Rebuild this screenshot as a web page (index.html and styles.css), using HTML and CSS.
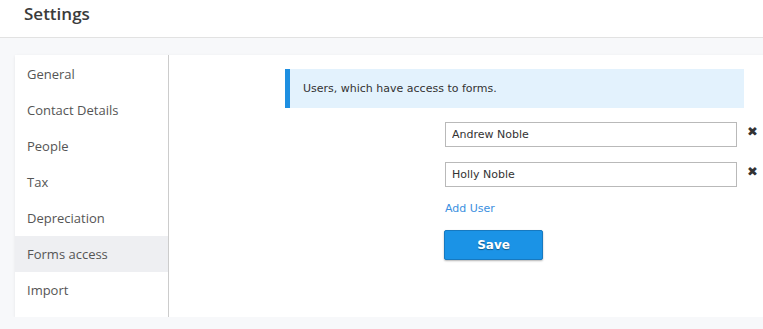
FILE: index.html
```html
<!DOCTYPE html>
<html lang="en">
<head>
  <meta charset="UTF-8">
  <meta name="viewport" content="width=device-width, initial-scale=1.0">
  <title>Settings - Forms access</title>
  <link rel="stylesheet" href="styles.css">
</head>
<body>
  <header class="page-header">
    <h1>Settings</h1>
  </header>

  <div class="page-body">
    <div class="card">
      <ul class="side-menu">
        <li>General</li>
        <li>Contact Details</li>
        <li>People</li>
        <li>Tax</li>
        <li>Depreciation</li>
        <li class="active">Forms access</li>
        <li>Import</li>
      </ul>

      <div class="content">
        <div class="info-box">Users, which have access to forms.</div>

        <form class="users-form">
          <div class="user-row">
            <input type="text" value="Andrew Noble">
            <span class="remove">&#10006;</span>
          </div>
          <div class="user-row">
            <input type="text" value="Holly Noble">
            <span class="remove">&#10006;</span>
          </div>
          <a href="#" class="add-link">Add User</a>
          <button type="button" class="btn-save">Save</button>
        </form>
      </div>
    </div>
  </div>
</body>
</html>
```

FILE: styles.css
```css
body {
  margin: 0;
  padding: 0;
  background-color: #f7f8fa;
  font-family: "Open Sans", Arial, sans-serif;
  color: #333;
  overflow: hidden;
}

.page-header {
  height: 37px;
  background-color: white;
  border-bottom: 1px solid #e2e2e2;
}

  .page-header h1 {
    margin: 0;
    padding-left: 24px;
    font-size: 17px;
    font-weight: 600;
    line-height: 28px;
    color: #3b3b3b;
  }

.page-body {
  padding: 17px 0 0 15px;
}

.card {
  display: flex;
  height: 262px;
  margin-right: -20px;
  background-color: white;
  box-shadow: 0 1px 3px rgba(0, 0, 0, 0.08);
}

.side-menu {
  list-style: none;
  margin: 0;
  padding: 1px 0 9px;
  width: 153px;
  border-right: 1px solid #cccccc;
}

  .side-menu li {
    height: 36px;
    line-height: 36px;
    padding-left: 12px;
    font-size: 13px;
    color: #555;
  }

  .side-menu li.active {
    background-color: #eeeff2;
  }

.content {
  flex: 1;
  padding: 14px 0 0 116px;
  font-family: "DejaVu Sans", Verdana, sans-serif;
  font-size: 11px;
}

.info-box {
  width: 441px;
  height: 39px;
  line-height: 39px;
  padding-left: 13px;
  border-left: 5px solid #1e8fe1;
  background-color: #e3f2fd;
  color: #333;
}

.users-form {
  display: flex;
  flex-direction: column;
  align-items: flex-start;
  margin: 14px 0 0 160px;
}

.user-row {
  display: flex;
  align-items: center;
  margin-bottom: 15px;
}

  .user-row input {
    box-sizing: border-box;
    width: 292px;
    height: 25px;
    padding: 0 6px;
    border: 1px solid #b9b9b9;
    font-family: "DejaVu Sans", Verdana, sans-serif;
    font-size: 11px;
    color: #333;
  }

.remove {
  margin-left: 10px;
  margin-top: -6px;
  font-size: 13px;
  color: #333;
}

.add-link {
  margin-top: 0;
  color: #3b8fe0;
  text-decoration: none;
}

.btn-save {
  width: 99px;
  height: 30px;
  margin-top: 15px;
  margin-left: -1px;
  background-color: #1b93e6;
  border: 1px solid #1779c0;
  border-radius: 2px;
  box-shadow: 0 1px 2px rgba(0, 0, 0, 0.3);
  color: white;
  font-family: "DejaVu Sans", Verdana, sans-serif;
  font-size: 12px;
  font-weight: bold;
  text-shadow: 0 1px 1px rgba(0, 0, 0, 0.4);
  cursor: pointer;
}
```
